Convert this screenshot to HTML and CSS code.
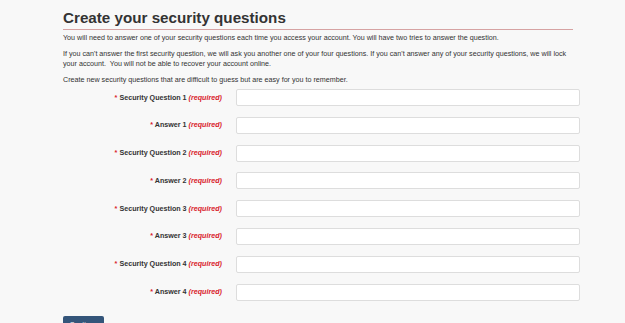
FILE: index.html
```html
<!DOCTYPE html>
<html lang="en">
<head>
  <meta charset="UTF-8" />
  <title>Create your security questions</title>
  <link rel="stylesheet" href="styles.css">
</head>
<body>
  <div class="page">
    <h1 class="page-title">Create your security questions</h1>
    <div class="intro">
      <p>You will need to answer one of your security questions each time you access your account. You will have two tries to answer the question.</p>
      <p>If you can't answer the first security question, we will ask you another one of your four questions. If you can't answer any of your security questions, we will lock your account.&nbsp; You will not be able to recover your account online.</p>
      <p>Create new security questions that are difficult to guess but are easy for you to remember.</p>
    </div>

    <form class="form-horizontal">
      <div class="form-row">
        <label for="q1"><span class="star">*</span> Security Question 1 <em class="req">(required)</em></label>
        <input type="text" id="q1">
      </div>
      <div class="form-row">
        <label for="a1"><span class="star">*</span> Answer 1 <em class="req">(required)</em></label>
        <input type="text" id="a1">
      </div>
      <div class="form-row">
        <label for="q2"><span class="star">*</span> Security Question 2 <em class="req">(required)</em></label>
        <input type="text" id="q2">
      </div>
      <div class="form-row">
        <label for="a2"><span class="star">*</span> Answer 2 <em class="req">(required)</em></label>
        <input type="text" id="a2">
      </div>
      <div class="form-row">
        <label for="q3"><span class="star">*</span> Security Question 3 <em class="req">(required)</em></label>
        <input type="text" id="q3">
      </div>
      <div class="form-row">
        <label for="a3"><span class="star">*</span> Answer 3 <em class="req">(required)</em></label>
        <input type="text" id="a3">
      </div>
      <div class="form-row">
        <label for="q4"><span class="star">*</span> Security Question 4 <em class="req">(required)</em></label>
        <input type="text" id="q4">
      </div>
      <div class="form-row">
        <label for="a4"><span class="star">*</span> Answer 4 <em class="req">(required)</em></label>
        <input type="text" id="a4">
      </div>
      <button type="button" class="btn-continue">Continue</button>
    </form>
  </div>
</body>
</html>
```

FILE: styles.css
```css
* { box-sizing: border-box; }
body {
  margin: 0;
  padding: 0;
  font-family: "Liberation Sans", Arial, sans-serif;
  background-color: #f8f8f8;
  color: #333;
  overflow: hidden;
}
.page {
  width: 510px;
  margin-left: 63px;
  padding-top: 8px;
}
.page-title {
  margin: 0;
  font-size: 15.2px;
  line-height: 19px;
  font-weight: bold;
  color: #333;
  padding-bottom: 2px;
  border-bottom: 1px solid #d6a3a3;
}
.intro {
  padding-top: 3px;
  padding-bottom: 4px;
}
.intro p {
  margin: 0 0 6px;
  font-size: 7.16px;
  line-height: 10px;
  color: #333;
}
.intro p:last-child { margin-bottom: 0; }
.form-horizontal {
  width: 520px;
}
.form-row {
  display: flex;
  align-items: center;
  height: 17px;
  margin-bottom: 10.8px;
}
.form-row label {
  flex: 0 0 159px;
  text-align: right;
  font-size: 7.16px;
  font-weight: bold;
  color: #333;
  margin-right: 14px;
  white-space: nowrap;
}
.star { color: #d9202a; }
.req {
  color: #d9202a;
  font-style: italic;
}
.form-row input {
  flex: 0 0 344px;
  height: 17px;
  border: 1px solid #ddd;
  border-radius: 2px;
  background: #fff;
  padding: 0 4px;
  font-size: 7px;
}
.btn-continue {
  margin-top: 5px;
  width: 41px;
  height: 16px;
  border: none;
  border-radius: 2px;
  background-color: #34557a;
  color: #fff;
  font-family: inherit;
  font-size: 7px;
  padding: 0;
}
```
